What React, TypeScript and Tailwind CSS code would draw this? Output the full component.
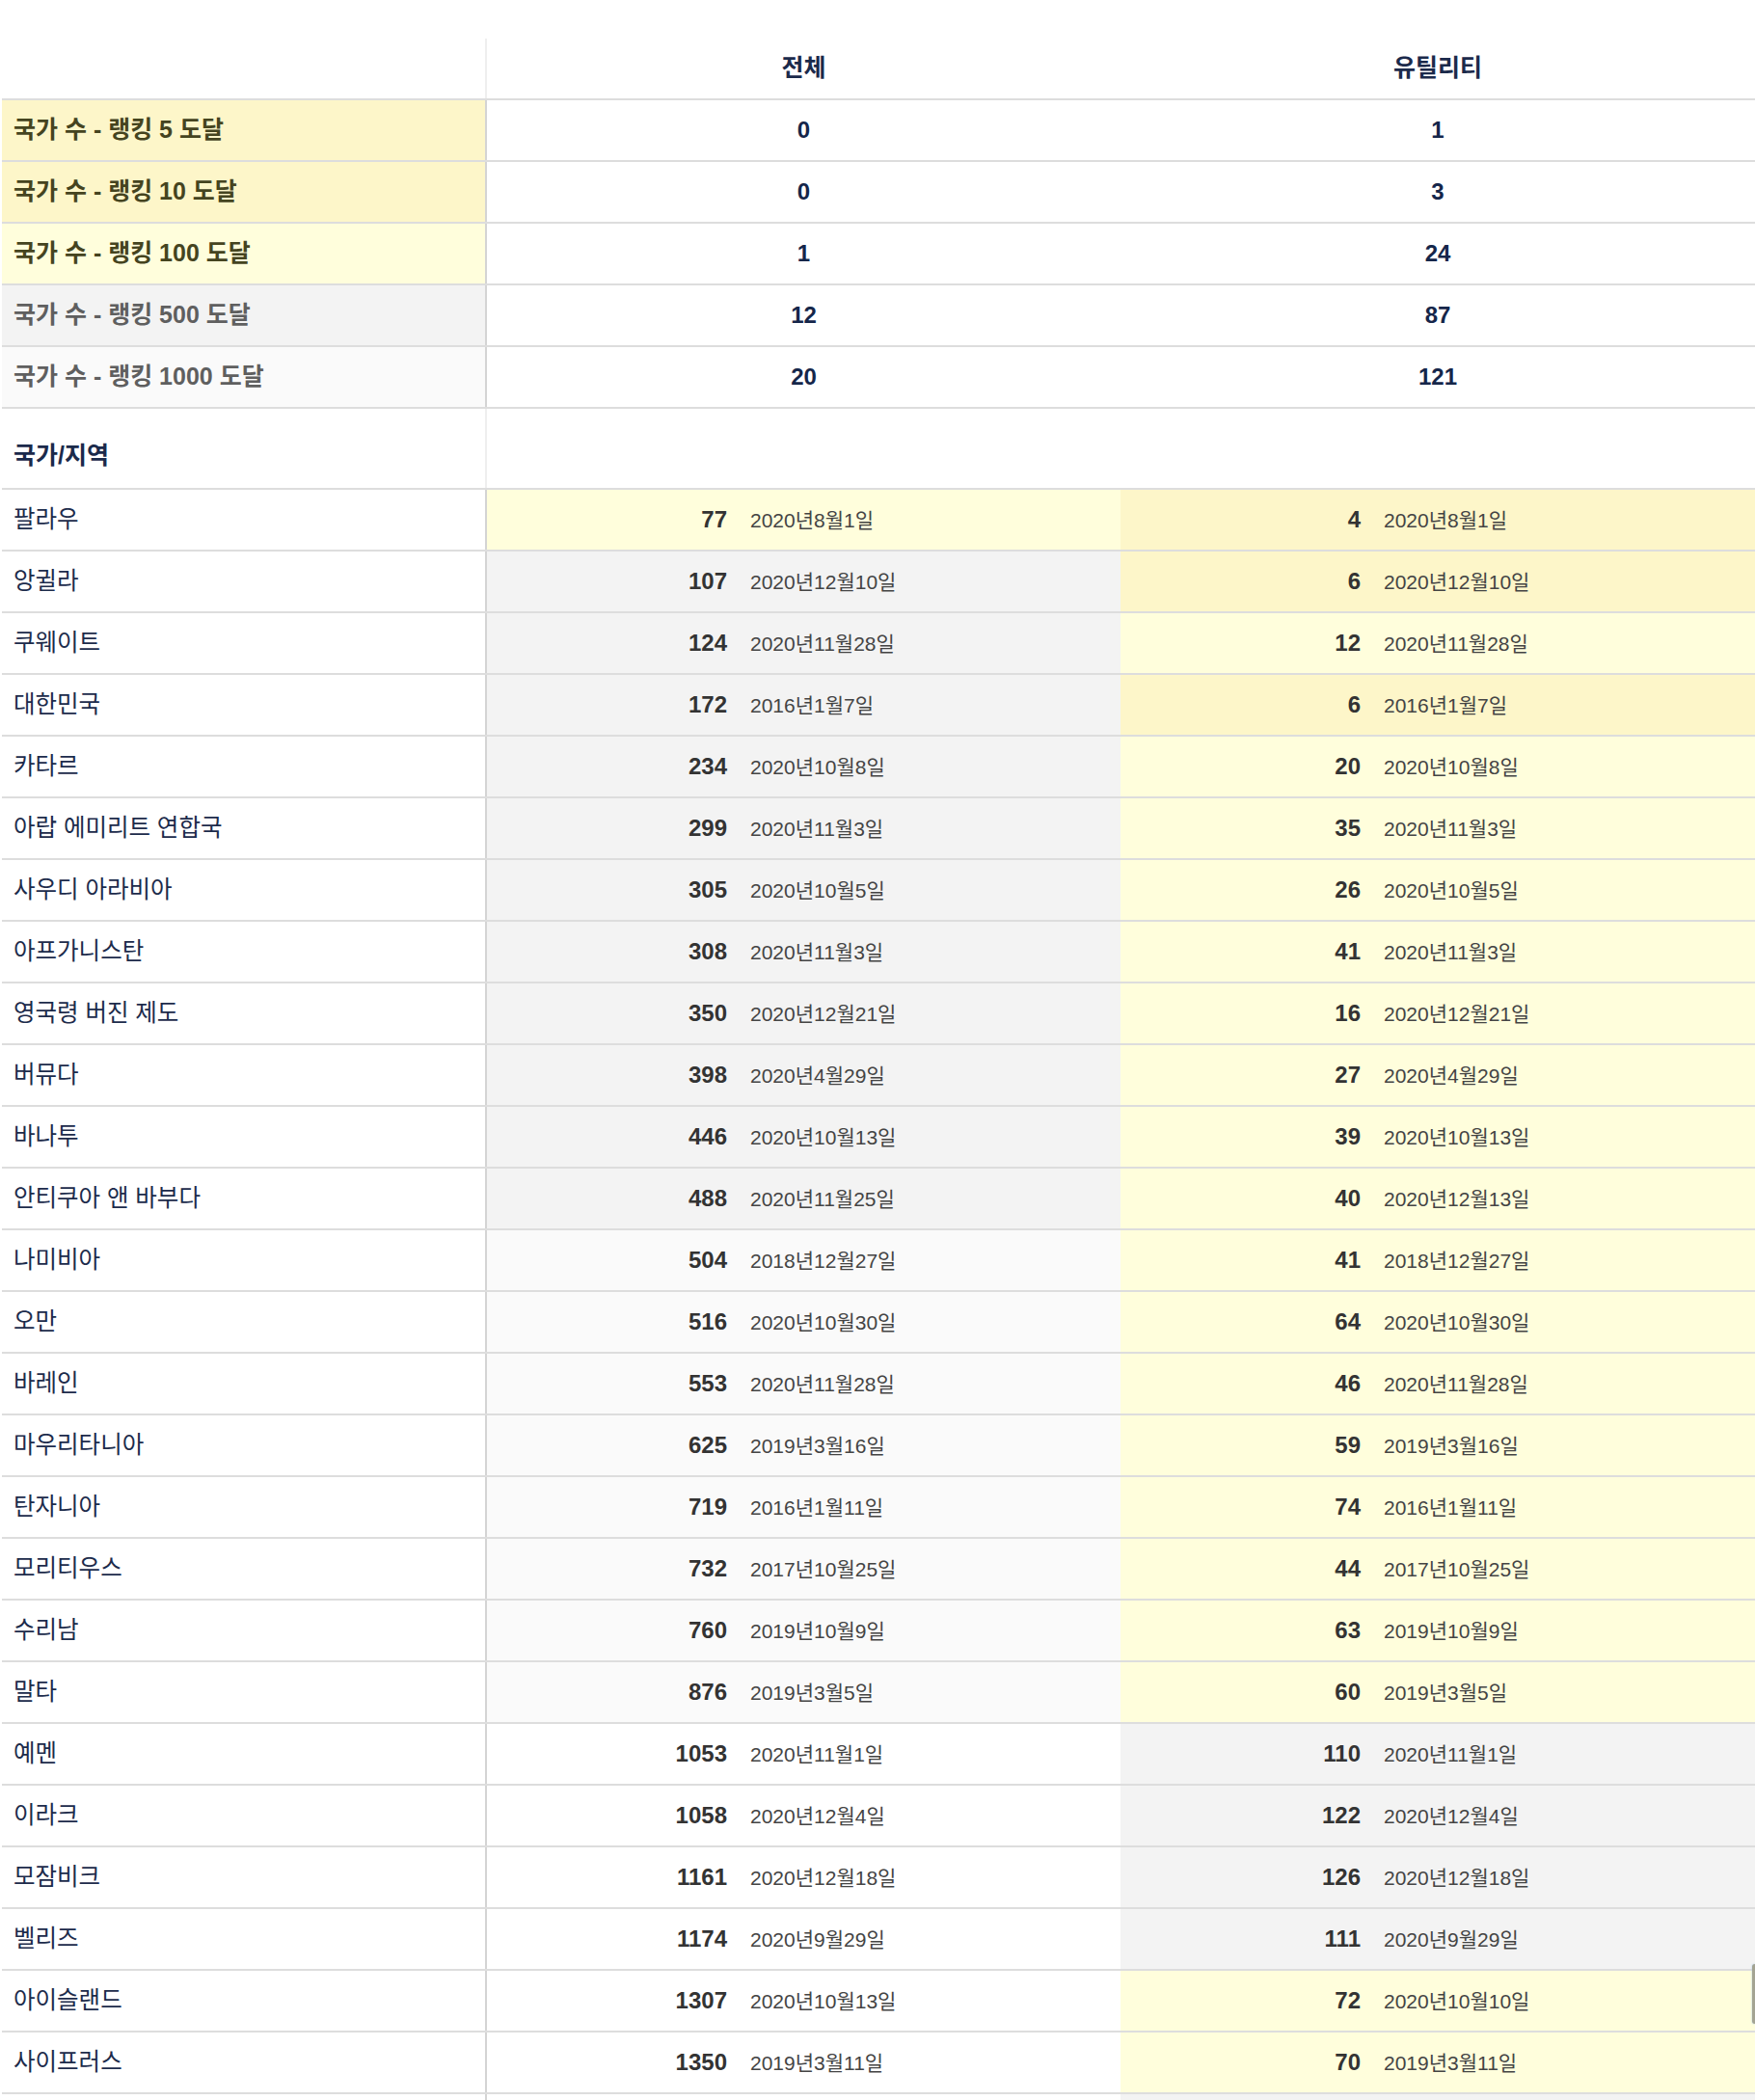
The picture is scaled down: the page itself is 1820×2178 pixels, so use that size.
import React from "react";

const FONT = { fontFamily: '"Liberation Sans", "Noto Sans CJK KR", sans-serif' };

type Row = [string, number, string, number, string];

const rows: Row[] = [
  ["팔라우", 77, "2020년8월1일", 4, "2020년8월1일"],
  ["앙귈라", 107, "2020년12월10일", 6, "2020년12월10일"],
  ["쿠웨이트", 124, "2020년11월28일", 12, "2020년11월28일"],
  ["대한민국", 172, "2016년1월7일", 6, "2016년1월7일"],
  ["카타르", 234, "2020년10월8일", 20, "2020년10월8일"],
  ["아랍 에미리트 연합국", 299, "2020년11월3일", 35, "2020년11월3일"],
  ["사우디 아라비아", 305, "2020년10월5일", 26, "2020년10월5일"],
  ["아프가니스탄", 308, "2020년11월3일", 41, "2020년11월3일"],
  ["영국령 버진 제도", 350, "2020년12월21일", 16, "2020년12월21일"],
  ["버뮤다", 398, "2020년4월29일", 27, "2020년4월29일"],
  ["바나투", 446, "2020년10월13일", 39, "2020년10월13일"],
  ["안티쿠아 앤 바부다", 488, "2020년11월25일", 40, "2020년12월13일"],
  ["나미비아", 504, "2018년12월27일", 41, "2018년12월27일"],
  ["오만", 516, "2020년10월30일", 64, "2020년10월30일"],
  ["바레인", 553, "2020년11월28일", 46, "2020년11월28일"],
  ["마우리타니아", 625, "2019년3월16일", 59, "2019년3월16일"],
  ["탄자니아", 719, "2016년1월11일", 74, "2016년1월11일"],
  ["모리티우스", 732, "2017년10월25일", 44, "2017년10월25일"],
  ["수리남", 760, "2019년10월9일", 63, "2019년10월9일"],
  ["말타", 876, "2019년3월5일", 60, "2019년3월5일"],
  ["예멘", 1053, "2020년11월1일", 110, "2020년11월1일"],
  ["이라크", 1058, "2020년12월4일", 122, "2020년12월4일"],
  ["모잠비크", 1161, "2020년12월18일", 126, "2020년12월18일"],
  ["벨리즈", 1174, "2020년9월29일", 111, "2020년9월29일"],
  ["아이슬랜드", 1307, "2020년10월13일", 72, "2020년10월10일"],
  ["사이프러스", 1350, "2019년3월11일", 70, "2019년3월11일"],
];

function rankBg(r: number): string {
  if (r <= 10) return "bg-[#fdf6c9]";
  if (r <= 100) return "bg-[#fffedc]";
  if (r <= 500) return "bg-[#f3f3f3]";
  if (r <= 1000) return "bg-[#fafafa]";
  return "bg-white";
}

const summary: { label: string; bg: string; color: string; a: number; b: number }[] = [
  { label: "국가 수 - 랭킹 5 도달", bg: "bg-[#fdf6c9]", color: "text-[#45441f]", a: 0, b: 1 },
  { label: "국가 수 - 랭킹 10 도달", bg: "bg-[#fdf6c9]", color: "text-[#45441f]", a: 0, b: 3 },
  { label: "국가 수 - 랭킹 100 도달", bg: "bg-[#fffedc]", color: "text-[#45441f]", a: 1, b: 24 },
  { label: "국가 수 - 랭킹 500 도달", bg: "bg-[#f3f3f3]", color: "text-[#5f5f5f]", a: 12, b: 87 },
  { label: "국가 수 - 랭킹 1000 도달", bg: "bg-[#fafafa]", color: "text-[#5f5f5f]", a: 20, b: 121 },
];

function ValueCell({ rank, date }: { rank: number; date: string }) {
  return (
    <div className={`flex-1 flex items-center ${rankBg(rank)}`}>
      <span className="w-[249px] text-right text-[24px] font-bold text-[#333333] leading-none">{rank}</span>
      <span className="pl-[24px] text-[21px] text-[#444444] leading-none">{date}</span>
    </div>
  );
}

export default function App() {
  return (
    <div className="relative w-[1820px] bg-white pt-10 overflow-hidden" style={FONT}>
      <div className="ml-[2px]">
        {/* header */}
        <div className="flex h-16 border-b-2 border-[#dddddd]">
          <div className="w-[503px] shrink-0 border-r-2 border-[#efefef]" />
          <div className="w-[657px] shrink-0 flex items-center justify-center text-[25px] font-bold text-[#1b2a4b]">전체</div>
          <div className="flex-1 flex items-center justify-center text-[25px] font-bold text-[#1b2a4b]">유틸리티</div>
        </div>
        {/* summary */}
        {summary.map((s) => (
          <div key={s.label} className="flex h-16 border-b-2 border-[#dddddd]">
            <div className={`w-[503px] shrink-0 border-r-2 border-[#d4d4d4] flex items-center pl-3 text-[25px] font-bold ${s.bg} ${s.color}`}>
              {s.label}
            </div>
            <div className="w-[657px] shrink-0 flex items-center justify-center text-[24px] font-bold text-[#15264a]">{s.a}</div>
            <div className="flex-1 flex items-center justify-center text-[24px] font-bold text-[#15264a]">{s.b}</div>
          </div>
        ))}
        {/* section header */}
        <div className="flex h-[84px] border-b-2 border-[#dddddd]">
          <div className="w-[503px] shrink-0 border-r-2 border-[#efefef] flex items-end pl-3 pb-[15px] text-[25px] font-bold text-[#1b2a4b]">
            국가/지역
          </div>
          <div className="flex-1" />
        </div>
        {/* data rows */}
        {rows.map((r) => (
          <div key={r[0]} className="flex h-16 border-b-2 border-[#dddddd]">
            <div className="w-[503px] shrink-0 border-r-2 border-[#d4d4d4] flex items-center pl-3 text-[24.5px] text-[#1c2b4b]">
              {r[0]}
            </div>
            <div className="w-[657px] shrink-0 flex">
              <ValueCell rank={r[1]} date={r[2]} />
            </div>
            <ValueCell rank={r[3]} date={r[4]} />
          </div>
        ))}
        {/* next row, cut off below the fold */}
        <div className="flex h-16">
          <div className="w-[503px] shrink-0 border-r-2 border-[#d4d4d4]" />
          <div className="w-[657px] shrink-0 bg-white" />
          <div className="flex-1 bg-[#f3f3f3]" />
        </div>
      </div>
      <div className="absolute right-0 top-[2037px] w-[3px] h-[62px] rounded-l-[3px] bg-[#a3a392] shadow-[0_0_2px_#9ec3e6]" />
    </div>
  );
}
